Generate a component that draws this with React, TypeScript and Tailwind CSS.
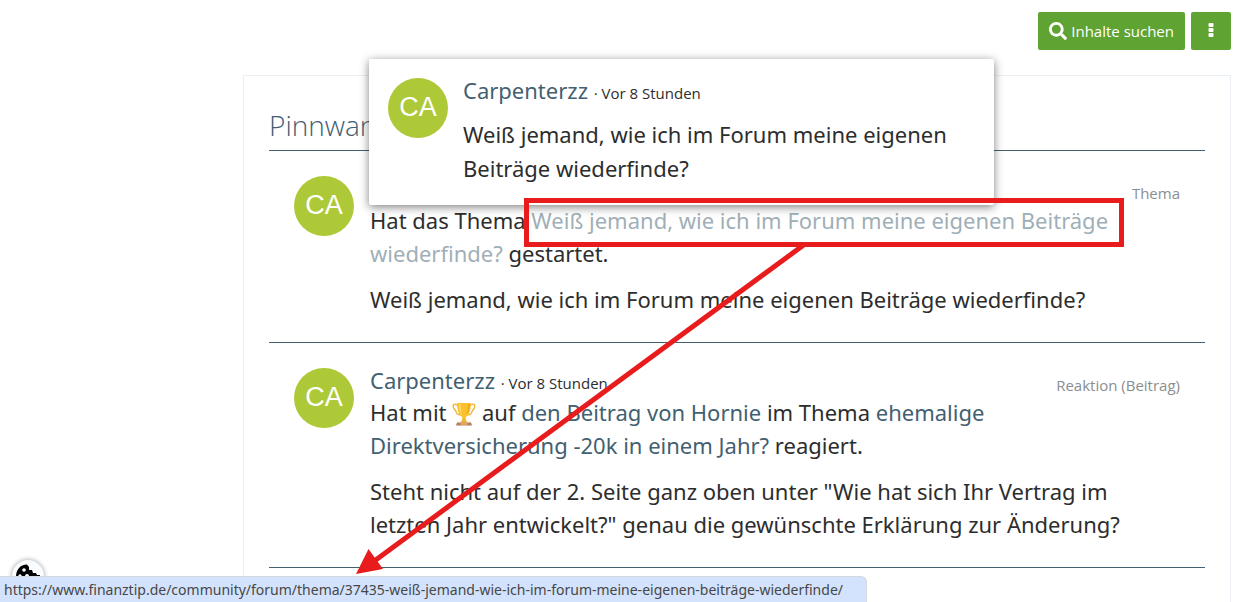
import type { ReactNode } from 'react';
import { FaSearch } from 'react-icons/fa';

const link = 'text-[#426070] hover:underline';

function Avatar() {
  return (
    <div className="flex size-15 shrink-0 items-center justify-center rounded-full bg-[#aec937] font-['Liberation_Sans',sans-serif] text-[27px] leading-none text-white">
      <span className="pb-0.5">CA</span>
    </div>
  );
}

function Trophy() {
  return (
    <svg viewBox="0 0 24 24" className="inline-block size-6 align-[-5px]" role="img" aria-label="Pokal">
      <path d="M6.500 4.500C5.500 2 1 .8 1.200 4.500C1.300 7.500 3.800 7.500 4.200 10C4.500 12 6 13 8.500 12.500M17.500 4.500c1-2.500 5.500-3.700 5.300 0C22.700 7.500 20.200 7.500 19.800 10c-.3 2-1.800 3-4.300 2.500" fill="none" stroke="#efb83c" strokeWidth="1.500" />
      <path d="M5.200 1h13.600c0 6-.8 11-4.300 13.500-1 .8-1.300 1.500-1.300 2.500h-2.400c0-1-.3-1.700-1.300-2.500C6 12 5.200 7 5.200 1z" fill="#fbc12d" />
      <path d="M7 2h1.500c0 5 .8 8 2 11C7.800 11 7 7 7 2z" fill="#ffdb70" />
      <path d="M16 2h2c0 5-1 8-4 11 1.300-3 2-6 2-11z" fill="#efaa22" />
      <path d="M10.500 16h3c0 2 .8 3 2.500 4.500H8c1.700-1.500 2.500-2.500 2.500-4.500z" fill="#f5b323" />
      <path d="M5 20.500h14l1 3H4z" fill="#b57a5e" />
      <path d="M8.500 21.200h7v1.500h-7z" fill="#e9b85a" />
    </svg>
  );
}

function Author() {
  return (
    <h3 className="h-8 leading-8">
      <a href="#profil" className={link}>Carpenterzz</a>{' '}
      <small className="font-['Open_Sans',sans-serif] text-[15px]">· Vor 8 Stunden</small>
    </h3>
  );
}

function Entry({ tag, children }: { tag: string; children: ReactNode }) {
  return (
    <li className="relative flex gap-4 border-b border-[#426070] px-[25px] pt-[25px] pb-[26px]">
      <Avatar />
      <div className="-mt-1 min-w-0 flex-1">
        <Author />
        {children}
      </div>
      <span className="absolute top-8 right-[25px] font-['Open_Sans',sans-serif] text-[15px] leading-5 text-[#8a8e91]">{tag}</span>
    </li>
  );
}

export default function App() {
  return (
    <div className="relative flex h-screen flex-col overflow-hidden bg-white pr-[17px] pl-[243px] font-['Noto_Sans',sans-serif] text-[22px] leading-[33px] text-[#2d2d2d]">
      <nav className="flex shrink-0 justify-end gap-1.5 pt-3 font-['Open_Sans',sans-serif]">
        <button type="button" className="flex h-[38px] items-center gap-1 rounded-[2px] bg-[#5fa332] px-[11px] text-[15px] text-white">
          <FaSearch className="size-[18px]" />
          Inhalte suchen
        </button>
        <button type="button" aria-label="Mehr" className="flex h-[38px] w-10 items-center justify-center rounded-[2px] bg-[#5fa332]">
          <svg viewBox="0 0 6 16" className="mb-0.5 h-4 w-1.5" fill="white">
            <rect x="0.500" y="1" width="5" height="4" rx="1" />
            <rect x="0.500" y="6" width="5" height="4" rx="1" />
            <rect x="0.500" y="11" width="5" height="4" rx="1" />
          </svg>
        </button>
      </nav>

      <main className="mt-[25px] flex-1 border border-b-0 border-[#e9eff5] px-[25px] pt-[29px]">
        <h2 className="border-b border-[#426070] pb-1 font-['Open_Sans',sans-serif] text-[28px] leading-[41px] font-light text-[#426070]">Pinnwand</h2>
        <ul>
          <Entry tag="Thema">
            <p>
              Hat das Thema{' '}
              <a href="#thema" className="text-[#9fafb7]">Weiß jemand, wie ich im Forum meine eigenen Beiträge wiederfinde?</a>{' '}
              gestartet.
            </p>
            <p className="mt-[13px]">Weiß jemand, wie ich im Forum meine eigenen Beiträge wiederfinde?</p>
          </Entry>
          <Entry tag="Reaktion (Beitrag)">
            <p>
              Hat mit <Trophy /> auf <a href="#beitrag" className={link}>den Beitrag von Hornie</a> im Thema{' '}
              <a href="#direktversicherung" className={link}>ehemalige Direktversicherung -20k in einem Jahr?</a> reagiert.
            </p>
            <p className="mt-[13px]">
              Steht nicht auf der 2. Seite ganz oben unter "Wie hat sich Ihr Vertrag im letzten Jahr entwickelt?" genau die gewünschte Erklärung zur Änderung?
            </p>
          </Entry>
        </ul>
      </main>

      <aside className="absolute top-[59px] left-[369px] flex w-[625px] gap-[15px] rounded-[2px] bg-white px-[19px] pt-[19px] pb-5 shadow-[0_2px_10px_rgba(0,0,0,0.5)]">
        <Avatar />
        <div className="-mt-1 min-w-0 flex-1">
          <Author />
          <p className="mt-[11px] leading-[34px]">Weiß jemand, wie ich im Forum meine eigenen Beiträge wiederfinde?</p>
        </div>
      </aside>

      <svg viewBox="0 0 1248 602" className="pointer-events-none absolute top-0 left-0 h-[602px] w-[1248px]" aria-hidden="true">
        <rect x="526.500" y="200.500" width="595" height="44" fill="none" stroke="#e81c1c" strokeWidth="5" />
        <path d="M805 244L373 562" stroke="#e81c1c" strokeWidth="5" />
        <path d="M356 574L368.500 549L383 569z" fill="#e81c1c" />
      </svg>

      <button type="button" aria-label="Cookie-Einstellungen" className="absolute top-[560px] left-3 flex size-8 items-center justify-center rounded-full bg-[#f8fcff] text-black shadow-[0_0_5px_rgba(0,0,0,0.4)]">
        <svg viewBox="0 0 26 26" className="size-[26px]">
          <path d="M1 14C1 7 5 1.500 12 1.500L14 4V7l3 0 1 3 3 0 1 2h3c0 8-5 13-12 13S1 21 1 14z" fill="black" />
          <g fill="#f8fcff">
            <circle cx="9" cy="7" r="1.800" />
            <circle cx="5" cy="13" r="1.700" />
            <circle cx="12" cy="13" r="2" />
            <circle cx="18" cy="16" r="1.500" />
            <circle cx="9" cy="19" r="1.800" />
          </g>
        </svg>
      </button>
      <div className="absolute bottom-0 left-0 rounded-tr-md border-t border-r border-[#d5d8dd] bg-[#d3e3fd] pr-[23px] pl-1 font-['Noto_Sans',sans-serif] text-sm leading-[25px] whitespace-nowrap text-[#474747]">
        https://www.finanztip.de/community/forum/thema/37435-weiß-jemand-wie-ich-im-forum-meine-eigenen-beiträge-wiederfinde/
      </div>
    </div>
  );
}
